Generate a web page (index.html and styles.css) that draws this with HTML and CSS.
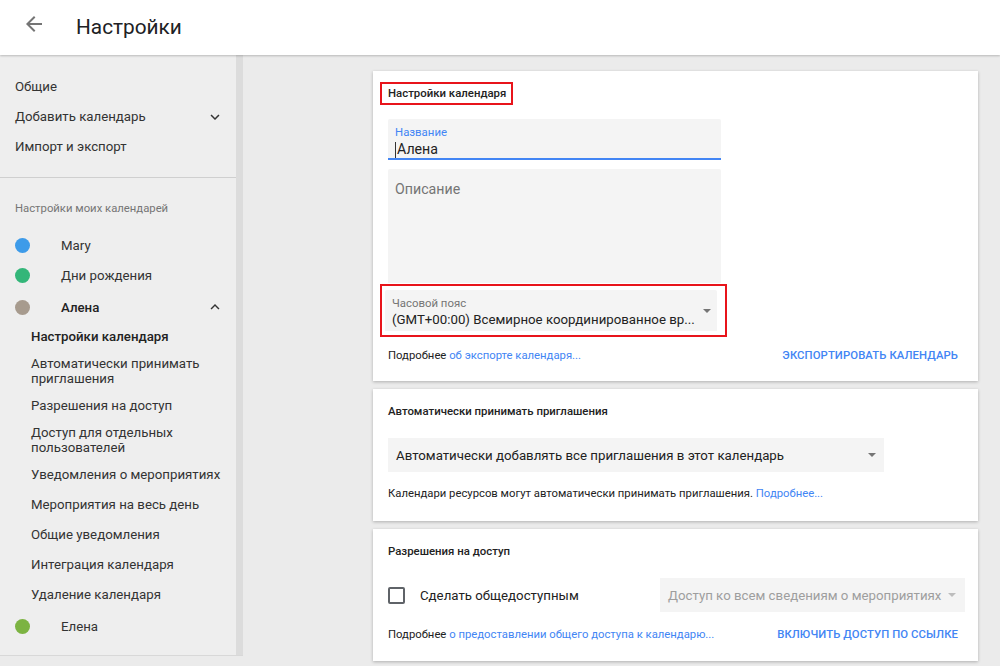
FILE: index.html
```html
<!DOCTYPE html>
<html lang="ru">
<head>
<meta charset="utf-8">
<title>Настройки</title>
<link rel="stylesheet" href="styles.css">
</head>
<body>
<header class="topbar">
  <svg class="back" viewBox="0 0 24 24" width="24" height="24"><path d="M20 11H7.83l5.59-5.59L12 4l-8 8 8 8 1.41-1.41L7.83 13H20v-2z" fill="#757575"/></svg>
  <h1 class="title">Настройки</h1>
</header>
<div class="layout">
  <nav class="sidebar">
    <div class="side-scroll">
      <div class="nav-top">
        <div class="nav-item">Общие</div>
        <div class="nav-item nav-exp">Добавить календарь
          <svg class="chev" viewBox="0 0 24 24" width="18" height="18"><path d="M7.41 8.59L12 13.17l4.59-4.58L18 10l-6 6-6-6z" fill="#333"/></svg>
        </div>
        <div class="nav-item">Импорт и экспорт</div>
      </div>
      <div class="nav-divider"></div>
      <div class="nav-label">Настройки моих календарей</div>
      <div class="cal-row"><span class="dot dot-blue"></span>Mary</div>
      <div class="cal-row"><span class="dot dot-green"></span>Дни рождения</div>
      <div class="cal-row cal-active"><span class="dot dot-taupe"></span>Алена
        <svg class="chev" viewBox="0 0 24 24" width="18" height="18"><path d="M7.41 15.41L12 10.83l4.59 4.58L18 14l-6-6-6 6z" fill="#333"/></svg>
      </div>
      <div class="sub sub-active">Настройки календаря</div>
      <div class="sub sub-two">Автоматически принимать приглашения</div>
      <div class="sub">Разрешения на доступ</div>
      <div class="sub sub-two">Доступ для отдельных пользователей</div>
      <div class="sub">Уведомления о мероприятиях</div>
      <div class="sub">Мероприятия на весь день</div>
      <div class="sub">Общие уведомления</div>
      <div class="sub">Интеграция календаря</div>
      <div class="sub">Удаление календаря</div>
      <div class="cal-row cal-last"><span class="dot dot-lime"></span>Елена</div>
    </div>
    <div class="scrollbar"></div>
  </nav>
  <main class="content">
    <section class="card card-cal">
      <div class="card-title boxed">Настройки календаря</div>
      <div class="field field-name">
        <div class="field-label blue">Название</div>
        <div class="field-value"><span class="caret"></span>Алена</div>
      </div>
      <div class="field field-desc">
        <div class="desc-ph">Описание</div>
      </div>
      <div class="tz-box">
        <div class="field field-tz">
          <div class="tz-text">
            <div class="field-label">Часовой пояс</div>
            <div class="tz-value">(GMT+00:00) Всемирное координированное вр...</div>
          </div>
          <span class="tri"></span>
        </div>
      </div>
      <div class="card-foot">
        <span>Подробнее <a class="link">об экспорте календаря...</a></span>
        <span class="btn">ЭКСПОРТИРОВАТЬ КАЛЕНДАРЬ</span>
      </div>
    </section>
    <section class="card card-auto">
      <div class="card-title">Автоматически принимать приглашения</div>
      <div class="select select-auto">
        <span class="sel-text">Автоматически добавлять все приглашения в этот календарь</span>
        <span class="tri"></span>
      </div>
      <div class="note">Календари ресурсов могут автоматически принимать приглашения. <a class="link">Подробнее...</a></div>
    </section>
    <section class="card card-share">
      <div class="card-title">Разрешения на доступ</div>
      <div class="share-row">
        <label class="check"><span class="box"></span>Сделать общедоступным</label>
        <div class="select select-off">
          <span class="sel-text">Доступ ко всем сведениям о мероприятиях</span>
          <span class="tri tri-off"></span>
        </div>
      </div>
      <div class="card-foot foot-share">
        <span>Подробнее <a class="link">о предоставлении общего доступа к календарю...</a></span>
        <span class="btn">ВКЛЮЧИТЬ ДОСТУП ПО ССЫЛКЕ</span>
      </div>
    </section>
  </main>
</div>
</body>
</html>
```

FILE: styles.css
```css
* { box-sizing: border-box; }
html, body { margin: 0; padding: 0; }
body {
  width: 1000px;
  height: 666px;
  overflow: hidden;
  background: #ebebeb;
  font-family: Roboto, "Noto Sans", "Liberation Sans", sans-serif;
  color: #3c4043;
}
.topbar {
  height: 55px;
  background: #fff;
  display: flex;
  align-items: center;
  box-shadow: 0 1px 2px rgba(0,0,0,0.22);
  position: relative;
  z-index: 2;
}
.back { margin-left: 22px; margin-top: -7px; }
.title {
  margin: 0 0 0 30px;
  font-size: 20.8px;
  font-weight: 400;
  color: #202124;
  margin-top: -2px;
}
.layout { display: flex; align-items: flex-start; }
.sidebar {
  display: flex;
  width: 243px;
  height: 601px;
  border-bottom: 1px solid #d8d8d8;
}
.side-scroll {
  width: 236px;
  background: #eeeeee;
  font-size: 13.25px;
  color: #333;
}
.scrollbar { width: 7px; background: #dcdcdc; }
.nav-top { padding-top: 17px; }
.nav-item {
  height: 30px;
  line-height: 30px;
  padding-left: 15px;
  display: flex;
  align-items: center;
}
.nav-exp { justify-content: space-between; padding-right: 12px; }
.chev { display: block; }
.nav-divider { height: 1px; background: #cfcfcf; margin-top: 15px; }
.nav-label {
  font-size: 11.3px;
  color: #757575;
  line-height: 16px;
  padding: 23px 0 13px 15px;
}
.cal-row {
  height: 30px;
  display: flex;
  align-items: center;
  padding-left: 15px;
  padding-right: 12px;
}
.cal-active { margin-top: 2px; font-weight: 500; color: #222; }
.cal-active .chev { margin-left: auto; }
.cal-last { margin-top: 1px; }
.dot {
  width: 15px;
  height: 15px;
  border-radius: 50%;
  margin-right: 31px;
  flex: none;
}
.dot-blue { background: #3d9be9; }
.dot-green { background: #33b679; }
.dot-taupe { background: #a79b8e; }
.dot-lime { background: #7cb342; }
.sub {
  padding-left: 31px;
  line-height: 30px;
  height: 30px;
  color: #333;
}
.sub-active { font-weight: 500; color: #222; }
.sub-two {
  height: auto;
  line-height: 15px;
  padding-top: 4px;
  padding-bottom: 5px;
  padding-right: 20px;
}
.content { padding: 16px 0 0 130px; }
.card {
  width: 605px;
  background: #fff;
  box-shadow: 0 1px 3px rgba(0,0,0,0.25);
  padding: 0 20px 0 15px;
  margin-bottom: 8px;
}
.card-cal { padding-top: 11px; padding-bottom: 8px; }
.card-title {
  font-size: 11.4px;
  font-weight: 500;
  color: #222;
  line-height: 16px;
}
.boxed {
  display: inline-block;
  border: 2px solid #e8141b;
  height: 23px;
  line-height: 19px;
  padding: 0 5px 0 6px;
  margin-left: -8px;
  margin-bottom: 14px;
}
.field {
  width: 333px;
  background: #f4f4f4;
  border-radius: 2px 2px 0 0;
}
.field-name {
  height: 41px;
  padding: 6px 7px 0;
  border-bottom: 2px solid #4285f4;
}
.field-label {
  font-size: 11.4px;
  line-height: 14px;
  color: #757575;
}
.blue { color: #4285f4; }
.field-value {
  font-size: 14.2px;
  line-height: 17px;
  color: #222;
  margin-top: 2px;
  display: flex;
  align-items: center;
}
.caret { width: 1px; height: 16px; background: #333; margin-right: 1px; }
.field-desc {
  margin-top: 9px;
  height: 114px;
  padding: 11px 7px 0;
}
.desc-ph { font-size: 14.2px; color: #757575; line-height: 18px; }
.tz-box {
  margin-left: -8px;
  margin-top: 1px;
  width: 347px;
  height: 53px;
  border: 2px solid #e8141b;
  padding: 4px 8px 4px 3px;
}
.field-tz {
  width: 332px;
  height: 41px;
  padding: 6px 7px 0;
  display: flex;
  justify-content: space-between;
}
.tz-text { min-width: 0; }
.tz-value {
  font-size: 13.25px;
  line-height: 16px;
  color: #222;
  margin-top: 2px;
  white-space: nowrap;
}
.tri {
  width: 0; height: 0;
  border-left: 4.5px solid transparent;
  border-right: 4.5px solid transparent;
  border-top: 4.5px solid #757575;
  flex: none;
}
.field-tz .tri { margin-top: 13px; margin-right: -1px; }
.card-foot {
  height: 36px;
  display: flex;
  align-items: center;
  justify-content: space-between;
  font-size: 11.3px;
  color: #222;
}
.link { color: #4285f4; text-decoration: none; }
.btn {
  color: #4285f4;
  font-weight: 500;
  font-size: 11.3px;
  letter-spacing: 0.1px;
}
.card-auto { padding-top: 14px; padding-bottom: 19px; }
.select {
  height: 34px;
  background: #f4f4f4;
  display: flex;
  align-items: center;
  justify-content: space-between;
  padding: 0 8px;
  font-size: 13.25px;
  color: #222;
}
.sel-text { white-space: nowrap; }
.select-auto { width: 496px; margin-top: 19px; }
.note { font-size: 11.3px; line-height: 16px; margin-top: 14px; color: #222; }
.card-share { padding-top: 14px; padding-bottom: 11px; }
.share-row {
  margin-top: 19px;
  height: 34px;
  display: flex;
  align-items: center;
  justify-content: space-between;
  margin-right: -7px;
}
.check {
  display: flex;
  align-items: center;
  font-size: 13.25px;
  color: #222;
}
.box {
  width: 17px;
  height: 17px;
  border: 2px solid #5f6368;
  border-radius: 2px;
  margin-right: 15px;
}
.select-off { width: 305px; color: #9e9e9e; padding-right: 9px; }
.tri-off { border-top-color: #bdbdbd; }
.foot-share { height: 32px; margin-top: 6px; }
```
